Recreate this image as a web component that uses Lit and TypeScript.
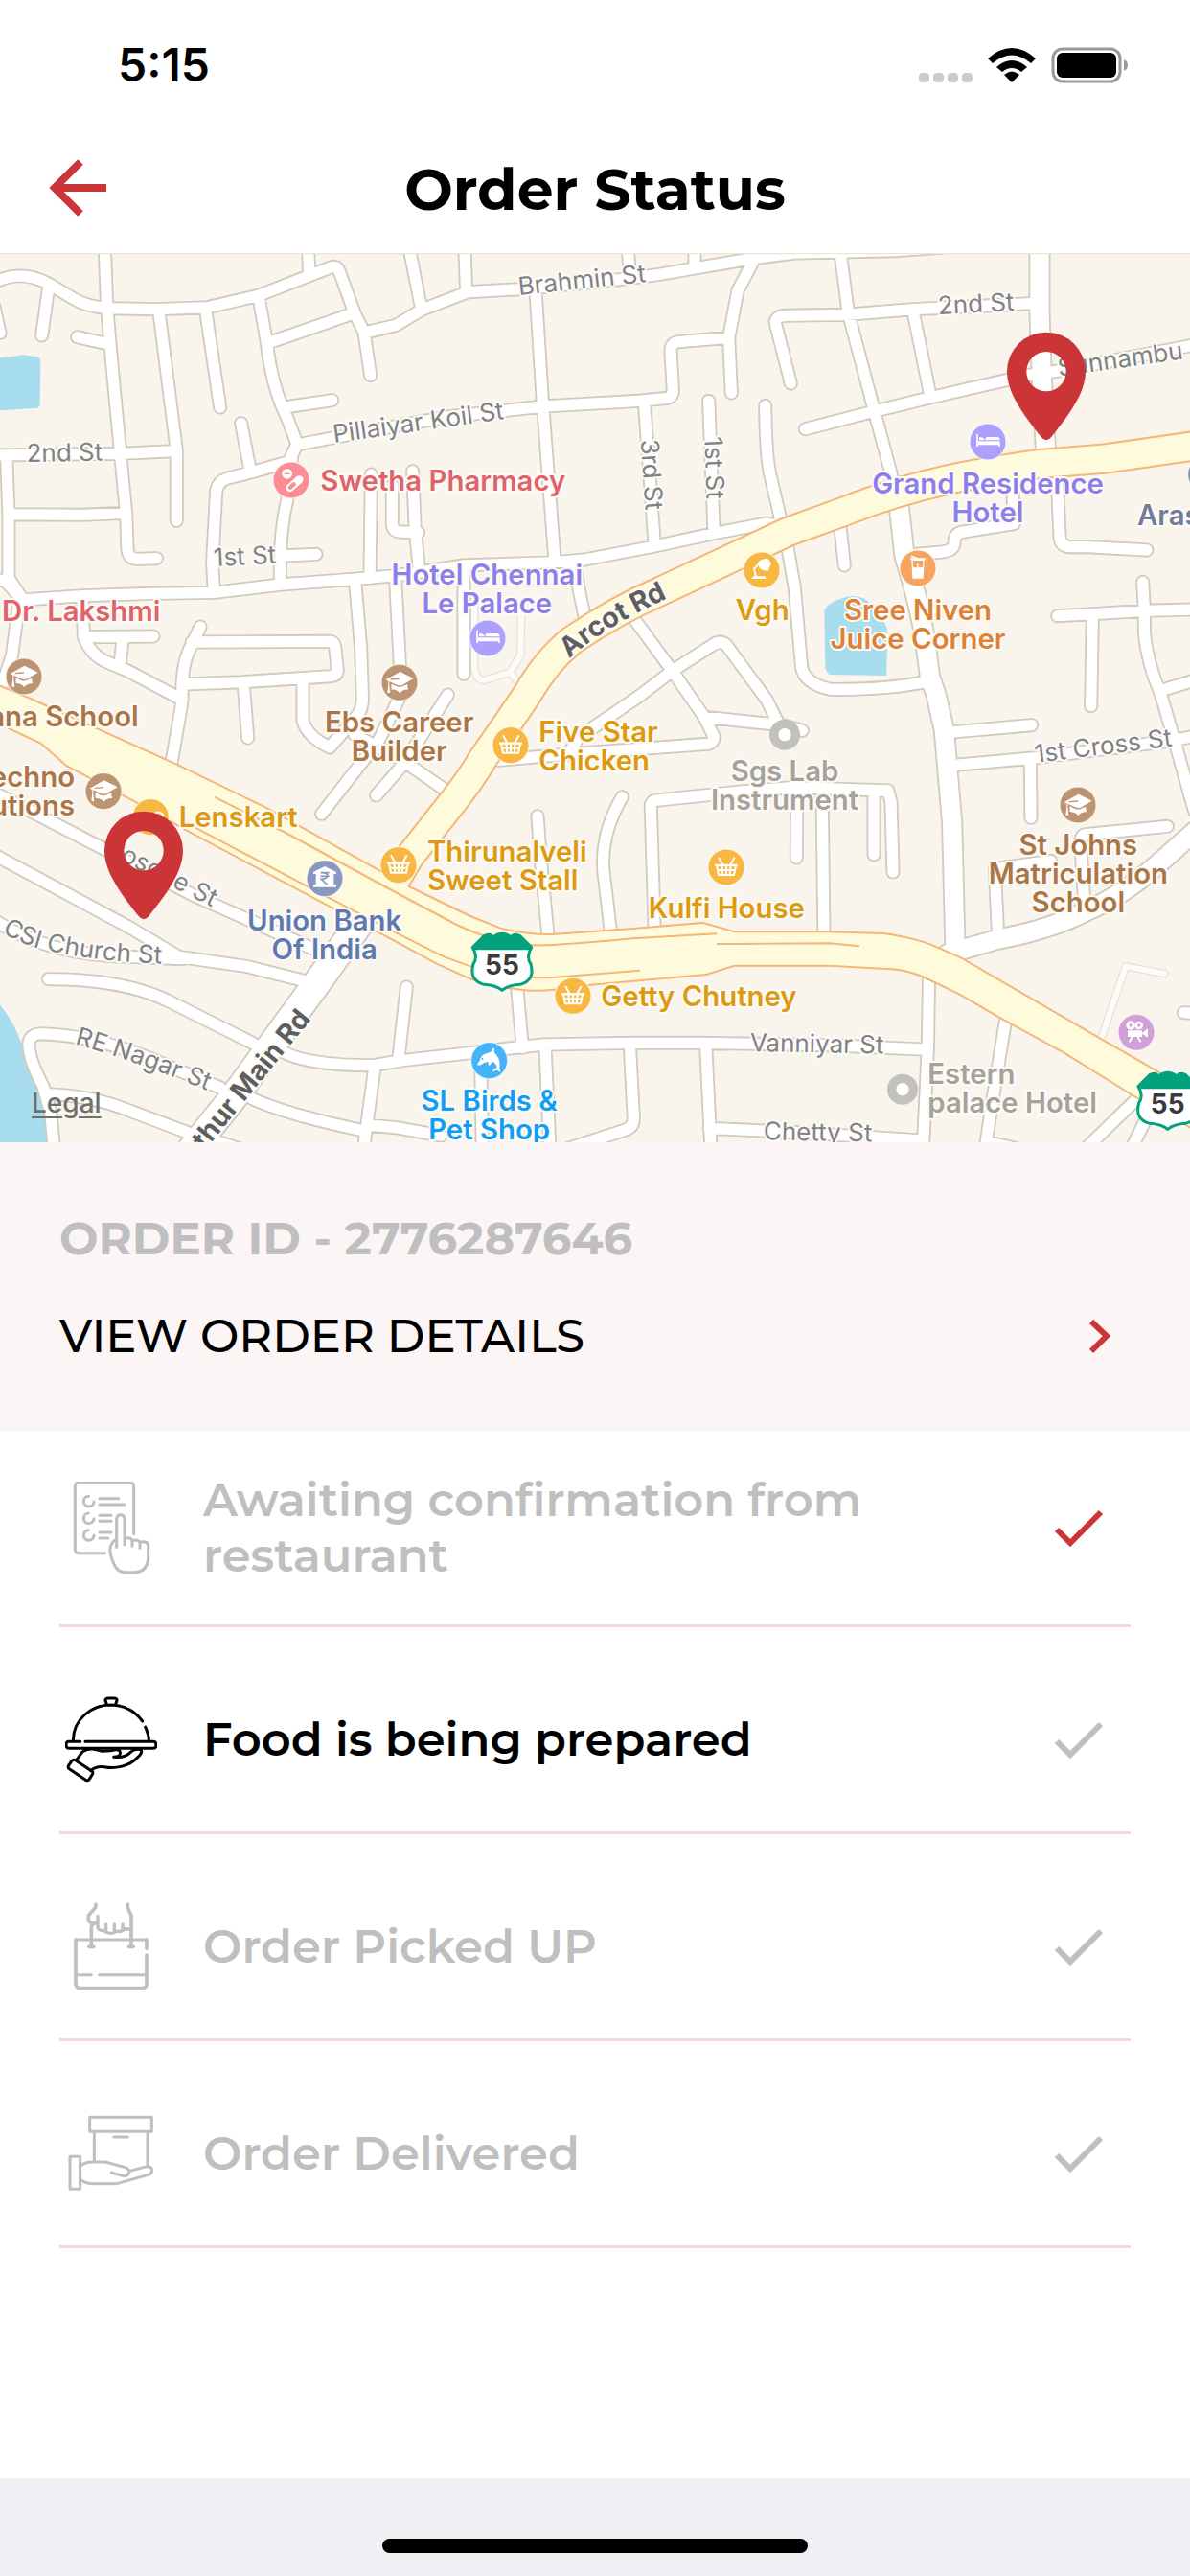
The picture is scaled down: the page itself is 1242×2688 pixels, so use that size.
import { LitElement, html, svg, css } from "lit";
import { customElement, property } from "lit/decorators.js";
import { classMap } from "lit/directives/class-map.js";

/* ---------- Map data: canvas units, 3726 wide ---------- */

const STREETS = [
  "M-10 100C40 78 90 76 150 107L230 155Q270 180 340 185L490 188L650 182L810 145L1035 57Q1055 50 1062 68L1110 200L1140 260L1160 395",
  "M328 0L335 180L345 300L377 640L395 830L399 940Q402 970 430 970L490 968",
  "M152 120L131 270",
  "M-18 180L0 262",
  "M242 275L330 295",
  "M497 190L553 630L553 850",
  "M643 185L689 495",
  "M810 150L835 290Q850 430 900 530L930 610L905 665L800 695L710 718Q680 728 677 760L665 980L670 1075",
  "M835 295L1095 205",
  "M1140 262L1240 238L1320 190L1465 134L1630 125L1940 95L2060 80L2350 30L2490 12L2800 5L2950 -5",
  "M965 0L968 75",
  "M890 495L1040 473",
  "M755 545L783 690",
  "M930 612L1150 570L1400 525L1700 492L2000 475L2090 466Q2108 462 2107 440L2100 320Q2100 292 2125 290L2280 277",
  "M2365 25L2310 130L2282 277L2290 450",
  "M1282 0L1320 190",
  "M1455 0L1460 135",
  "M1966 0L1972 80",
  "M2175 0L2175 60",
  "M1677 130L1700 490L1737 975",
  "M2017 475L2050 930",
  "M2219 475L2235 880",
  "M2396 490Q2398 640 2410 700L2450 870",
  "M2460 900L2488 1060L2510 1310Q2520 1360 2600 1378Q2780 1380 2910 1352",
  "M3230 170L2860 188L2650 205L2460 208Q2420 210 2430 240L2476 420",
  "M2630 0L2656 200L2736 500L2800 740",
  "M2858 190L2911 450",
  "M2521 563L2736 508L2911 465L3216 395L3320 380L3740 300",
  "M3311 740L3318 900Q3320 930 3350 932L3406 932L3591 942",
  "M3171 740L3174 860L3010 886Q2988 892 2988 920Q2985 945 2950 948L2870 955",
  "M2631 870L2644 990",
  "M3578 1042L3583 1130L3583 1200Q3590 1290 3635 1395L3672 1520L3740 1760",
  "M3311 1148L3421 1142L3581 1132L3740 1128",
  "M3421 1142L3416 1430",
  "M3640 1380L3740 1350",
  "M-10 645L377 640L545 632",
  "M20 645L27 830L27 1030L70 1095",
  "M-10 1035L15 1037L70 1098L260 1085L480 1078L670 1075L880 1050L1120 1032L1240 1022L1450 990L1737 980L1830 972L2050 930L2235 890L2400 858L2460 870",
  "M27 830L255 832L395 826",
  "M60 1100L38 1270L-5 1400",
  "M258 1085L262 1210Q280 1270 340 1295L400 1320L570 1410",
  "M262 1214L480 1212",
  "M385 1214L375 1305",
  "M627 1182L590 1260Q568 1310 570 1400L568 1430L535 1620",
  "M600 1230L1035 1228Q1048 1230 1050 1250L1057 1320Q1055 1335 1035 1337L760 1355L570 1362",
  "M762 1355L776 1530",
  "M948 1345L948 1475Q960 1525 1032 1560L1118 1460Q1136 1440 1135 1400L1130 1250L1112 1040",
  "M1238 1030L1252 1300",
  "M1452 1000L1452 1330",
  "M1228 740L1228 865Q1232 885 1255 885L1310 887",
  "M1292 695L1300 880L1312 1000",
  "M1162 705L1158 1030",
  "M915 640L900 780Q872 900 878 1045",
  "M878 960L990 955",
  "M1800 990Q1815 1090 1838 1180",
  "M1980 1150L2105 1320L2205 1465L2235 1525Q2237 1545 2215 1549L1790 1580L1560 1600",
  "M2105 1320L2230 1240Q2255 1222 2275 1240L2400 1410L2440 1490",
  "M2105 1320L2000 1400L1810 1530L1780 1580",
  "M2205 1465L2450 1490L2512 1507",
  "M1402 1395L1265 1610L1178 1710",
  "M1255 1395L1185 1540L1007 1768",
  "M1110 1520L1260 1600L1390 1690",
  "M-10 1705L320 1875L600 2020L980 2190",
  "M-10 1900L400 2120L560 2215L770 2245L950 2290",
  "M-10 2105Q150 2210 400 2215L570 2222",
  "M152 2285Q380 2285 520 2350L800 2490",
  "M170 2820L158 2700L135 2620Q92 2540 90 2490Q90 2458 130 2456Q280 2460 450 2525L690 2625",
  "M150 2645Q290 2650 400 2695L600 2770",
  "M790 2660Q900 2710 1140 2760",
  "M670 2790L760 2820",
  "M880 2510Q960 2556 1170 2555L1260 2540L1480 2515L1700 2490L1980 2485L2200 2485L2596 2492L2890 2505",
  "M1273 2310L1247 2540",
  "M1173 2560L1138 2820",
  "M1150 2742L1240 2750L1380 2775",
  "M1618 2300L1636 2500",
  "M1505 2520L1510 2820",
  "M1707 2500L1722 2820",
  "M1972 2490L1984 2720Q1984 2750 1955 2758L1780 2815",
  "M2210 2490L2226 2820",
  "M2220 2752L2500 2765L2880 2790",
  "M1683 1775L1692 1900L1718 2170",
  "M1948 1715Q1880 1830 1890 1950L1915 2160",
  "M2050 2150L2038 1750Q2035 1725 2060 1725L2300 1700L2480 1685L2780 1695L2790 1730L2796 1950",
  "M2495 1690L2494 1905",
  "M2574 1690L2580 2160",
  "M2736 1700L2736 1895",
  "M2980 1512L3230 1490",
  "M2990 1615L3246 1592L3660 1540L3740 1525",
  "M3226 1600L3228 1780",
  "M3655 1807L3400 1832Q3382 1835 3384 1865L3396 2060",
  "M3290 1915L3115 1940L3124 2130",
  "M2909 2260L2905 2500L2890 2820",
  "M3151 2400L3110 2650L3084 2820",
  "M3090 2795L3180 2815",
  "M3580 2640L3395 2820",
  "M3600 2700L3540 2820",
  "M3706 2390L3745 2392",
].join("");

const ROADS = [
  "M3255 -20L3255 200L3262 400L3275 640",
  "M2812 780L2832 960Q2885 1130 2900 1250L2912 1340L2931 1395L2956 1505L2981 1795L2991 2190",
  "M2970 2205L3126 2160Q3290 2130 3406 2070Q3520 2020 3620 1930L3750 1815",
].join("");

const AVENUE = "M1140 2090L1005 2280L735 2650L590 2830";
const LANES =
  "M1485 1100L1485 1310Q1490 1348 1515 1350L1597 1325L1630 1270L1632 1140M1597 1325L1640 1380M3445 2480L3525 2245L3646 2268";
const ARCOT =
  "M3760 613L3466 655L3256 672Q3090 695 2966 722Q2790 762 2646 820L2466 885L2070 1070Q1930 1130 1790 1225Q1710 1290 1650 1395L1585 1490L1515 1590Q1480 1650 1430 1715L1280 1905L1230 1990";
const TRUNK =
  "M-20 1362L100 1412L550 1615L830 1750L1200 1955L1290 2003L1470 2090L1570 2130Q1660 2150 1730 2148L1980 2130L2200 2112L2300 2140L2596 2140L2766 2145Q2870 2160 2926 2185L3006 2220L3446 2475L3760 2655L3760 2765L3546 2645L3336 2515L3126 2400L3006 2330L2891 2275Q2830 2250 2776 2250L2596 2240L2300 2240L2210 2268L1850 2300Q1750 2318 1660 2318Q1560 2310 1470 2280L1370 2235L1260 2175L600 1825L420 1725L210 1615L130 1545L-20 1475Z";
const TRUNK_LINES =
  "M672 1715L900 1830L1260 2025L1430 2115Q1560 2175 1660 2179Q1740 2182 1980 2158L2245 2143M2244 2175L2596 2173L2691 2182M610 1810L1000 2015L1230 2135L1390 2215L1500 2255Q1620 2285 1730 2280L2003 2258";
const WATER =
  "M0 340L45 335L70 330L118 337L127 345L125 490L118 497L0 505ZM2581 1130Q2596 1105 2631 1095Q2676 1075 2716 1100L2766 1160L2778 1190L2776 1335L2596 1332L2584 1315ZM0 2365Q50 2430 68 2490Q72 2530 110 2600Q145 2700 148 2810L0 2810Z";

type Anchor = "start" | "middle" | "end";
type Poi = { lines: string[]; x: number; y: number; tone: string; anchor: Anchor };

const poi = (tone: string, anchor: Anchor, x: number, y: number, ...lines: string[]): Poi => ({
  lines, x, y, tone, anchor,
});

const POIS: Poi[] = [
  poi("health", "start", 1003, 755, "Swetha Pharmacy"),
  poi("health", "start", 6, 1165, "Dr. Lakshmi"),
  poi("stay", "middle", 1525, 1050, "Hotel Chennai", "Le Palace"),
  poi("shop", "middle", 2387, 1160, "Vgh"),
  poi("stay", "middle", 3093, 765, "Grand Residence", "Hotel"),
  poi("juice", "middle", 2874, 1160, "Sree Niven", "Juice Corner"),
  poi("slate", "start", 3561, 863, "Aras"),
  poi("school", "end", 434, 1495, "ana School"),
  poi("school", "end", 234, 1683, "Techno", "utions"),
  poi("shop", "start", 560, 1810, "Lenskart"),
  poi("bank", "middle", 1016, 2132, "Union Bank", "Of India"),
  poi("school", "middle", 1250, 1512, "Ebs Career", "Builder"),
  poi("shop", "start", 1687, 1542, "Five Star", "Chicken"),
  poi("shop", "start", 1338, 1917, "Thirunalveli", "Sweet Stall"),
  poi("plain", "middle", 2457, 1665, "Sgs Lab", "Instrument"),
  poi("shop", "middle", 2275, 2093, "Kulfi House"),
  poi("shop", "start", 1882, 2370, "Getty Chutney"),
  poi("pet", "middle", 1532, 2698, "SL Birds &", "Pet Shop"),
  poi("plain", "start", 2905, 2612, "Estern", "palace Hotel"),
  poi("school", "middle", 3376, 1895, "St Johns", "Matriculation", "School"),
];

type RoadName = { text: string; x: number; y: number; turn: number; major?: boolean; anchor?: Anchor };
const ROAD_NAMES: RoadName[] = [
  { text: "2nd St", x: 83, y: 666, turn: -1 },
  { text: "1st St", x: 670, y: 993, turn: -3 },
  { text: "Pillaiyar Koil St", x: 1046, y: 606, turn: -8 },
  { text: "Brahmin St", x: 1625, y: 144, turn: -6 },
  { text: "3rd St", x: 2006, y: 597, turn: 86 },
  { text: "1st St", x: 2206, y: 587, turn: 88 },
  { text: "2nd St", x: 2938, y: 204, turn: -3 },
  { text: "Sunnambu", x: 3316, y: 398, turn: -8 },
  { text: "Posode St", x: 330, y: 1890, turn: 27 },
  { text: "Vanniyar St", x: 2348, y: 2511, turn: 1 },
  { text: "Chetty St", x: 2390, y: 2788, turn: 1 },
  { text: "1st Cross St", x: 3243, y: 1608, turn: -7 },
  { text: "Arthur Main Rd", x: 975, y: 2410, turn: -51, major: true, anchor: "end" },
];
const CURVED_NAMES = [
  { id: "arcot", text: "Arcot Rd", d: "M1783 1282Q1900 1172 2160 1062", major: true },
  { id: "church", text: "CSI Church St", d: "M6 2138Q140 2235 640 2240", major: false },
  { id: "nagar", text: "RE Nagar St", d: "M234 2488Q440 2545 760 2680", major: false },
];

const GLYPHS = {
  cap: svg`<path d="M-43-9L2-34L44-13L8 8Q0 10-8 7L-32-4L-32 8L-29 32L-38 32L-35 5L-35-5Z" fill="#fff"/><path d="M-28-10L0-12" stroke="#bd9472" stroke-width="4"/><path d="M-26 4L-8 12Q0 15 8 12L24 5L27 22Q12 20 1 33Q-10 20-25 22Z" fill="#fff"/>`,
  basket: svg`<g stroke="#fff" fill="none"><path d="M-24-31L-10-6M26-31L12-6" stroke-width="6"/><path d="M-36-6H36" stroke-width="7"/><path d="M-30-5L-24 24H24L30-5M-14-5L-11 24M0-5V24M14-5L11 24M-29 9H29" stroke-width="6"/></g>`,
  bed: svg`<path d="M-33-25V15M-33 7H36V15" stroke="#fff" stroke-width="5" fill="none"/><path d="M-31-2H38V8H-31Z" fill="#fff"/><path d="M-27-5V-14Q-14-16-10-7V-5ZM-7-5V-12Q-6-15 0-15H30Q38-14 38-5Z" fill="#fff"/>`,
  pill: svg`<circle cx="-13" cy="-20" r="16" fill="#fff"/><path d="M-22-20H-4" stroke="#fb8d93" stroke-width="4"/><path d="M-4 24L25-2" stroke="#fff" stroke-width="25" stroke-linecap="round"/><path d="M-3 23L8 13" stroke="#fb8d93" stroke-width="13" stroke-linecap="round"/>`,
  lamp: svg`<path d="M-32 27L-26 19H10L14 27Z" fill="#fff"/><path d="M-18 20L-24-4L-4-24" stroke="#fff" stroke-width="6" fill="none"/><path d="M-12-24Q4-40 22-34L30-20Q24-10 20 2Q4 4-8-8Z" fill="#fff"/>`,
  juice: svg`<path d="M-24-32H24V-26H20L17 32H-17L-20-26H-24Z" fill="#fff"/><path d="M-16-24H16L15-2H2V-14H-3V-2Q-10 0-15-6Z" fill="#f7a461"/><path d="M-22-38L-4-32V-26" stroke="#fff" stroke-width="5" fill="none"/>`,
  bank: svg`<path d="M-36-20L0-38L36-20V-14H28V20H36V27H-36V20H-28V-14H-36Z" fill="#fff"/><path d="M-13-18H14M-13-7H14M-10-18Q10-18 8-7Q4 2-11 2L8 20" stroke="#8a97c0" stroke-width="5" fill="none"/>`,
  glasses: svg`<g fill="none" stroke="#fff" stroke-width="7"><circle cx="-22" cy="0" r="15"/><circle cx="24" cy="0" r="15"/></g>`,
  dolphin: svg`<path d="M-38 14Q-36 6-30 2Q-28-16-10-22Q0-24 6-28Q10-38 16-40Q14-30 18-22Q36-4 32 22L35 36L24 30L10 35Q12 26 24 22Q22 8 10 4Q4 14-2 16Q-4 10-2 5Q-18 6-24 12Q-30 16-38 14Z" fill="#fff"/><circle cx="-22" cy="-5" r="3" fill="#45b3f7"/>`,
  film: svg`<circle cx="-18" cy="-22" r="14" fill="#fff"/><circle cx="8" cy="-22" r="13" fill="#fff"/><circle cx="-18" cy="-22" r="5" fill="#d2a0d9"/><circle cx="8" cy="-22" r="5" fill="#d2a0d9"/><path d="M-27-6H18V2L36-12V16L18 4V14H-27Z" fill="#fff"/><path d="M-12 14L-22 30M4 14L14 30" stroke="#fff" stroke-width="6"/>`,
  none: svg``,
};

const BADGES: { x: number; y: number; fill: string; glyph: keyof typeof GLYPHS }[] = [
  { x: 912, y: 723, fill: "#fb8d93", glyph: "pill" },
  { x: 75, y: 1338, fill: "#bd9472", glyph: "cap" },
  { x: 1251, y: 1357, fill: "#bd9472", glyph: "cap" },
  { x: 324, y: 1697, fill: "#bd9472", glyph: "cap" },
  { x: 3375, y: 1740, fill: "#bd9472", glyph: "cap" },
  { x: 1527, y: 1218, fill: "#ada0fd", glyph: "bed" },
  { x: 3093, y: 603, fill: "#ada0fd", glyph: "bed" },
  { x: 2385, y: 1005, fill: "#f7b740", glyph: "lamp" },
  { x: 2874, y: 999, fill: "#f7a461", glyph: "juice" },
  { x: 472, y: 1778, fill: "#f7b740", glyph: "glasses" },
  { x: 1017, y: 1970, fill: "#8a97c0", glyph: "bank" },
  { x: 1248, y: 1928, fill: "#f7b740", glyph: "basket" },
  { x: 1599, y: 1553, fill: "#f7b740", glyph: "basket" },
  { x: 2274, y: 1935, fill: "#f7b740", glyph: "basket" },
  { x: 1794, y: 2338, fill: "#f7b740", glyph: "basket" },
  { x: 1532, y: 2540, fill: "#45b3f7", glyph: "dolphin" },
  { x: 3558, y: 2452, fill: "#d2a0d9", glyph: "film" },
  { x: 3776, y: 705, fill: "#8090b0", glyph: "none" },
];

@customElement("route-map")
class RouteMap extends LitElement {
  static styles = css`
    :host {
      display: block;
      position: relative;
      font-family: Inter, "Liberation Sans", sans-serif;
    }
    .canvas {
      display: block;
      width: 100%;
      height: auto;
      background: #f9f5ed;
    }
    .street, .road, .avenue, .lane, .arcot, .lines {
      fill: none;
      stroke-linecap: round;
      stroke-linejoin: round;
    }
    .case { stroke: #d3cabe; }
    .fill { stroke: #fff; }
    .street.case { stroke-width: 45; }
    .street.fill { stroke-width: 34; }
    .road.case { stroke-width: 69; }
    .road.fill { stroke-width: 58; }
    .avenue.case { stroke-width: 95; }
    .avenue.fill { stroke-width: 84; }
    .lane.case { stroke: #e6e3dc; stroke-width: 26; }
    .lane.fill { stroke: #fdfbf7; stroke-width: 18; }
    .arcot.case { stroke: #f5b676; stroke-width: 97; stroke-linecap: butt; }
    .arcot.fill { stroke: #fdfbdb; stroke-width: 85; stroke-linecap: butt; }
    .trunk-case { fill: #f5b676; stroke: #f5b676; stroke-width: 12; stroke-linejoin: round; }
    .trunk { fill: #fdfbdb; }
    .lines { stroke: #f5b676; stroke-width: 6; stroke-linecap: butt; }
    .water { fill: #a8dcef; }
    .name, .poi {
      paint-order: stroke;
      stroke: #fdfbf7;
      stroke-width: 12;
      stroke-linejoin: round;
    }
    .name { font-size: 78px; fill: #808285; }
    .name.major { font-size: 86px; font-weight: 700; fill: #5d5e60; }
    .poi { font-size: 88px; font-weight: 600; }
    .health { fill: #e0636b; }
    .stay { fill: #8d7eea; }
    .shop { fill: #dd9a10; }
    .juice { fill: #df8134; }
    .slate { fill: #6f7d9b; }
    .school { fill: #aa7648; }
    .bank { fill: #5f79b1; }
    .plain { fill: #a5a29a; }
    .pet { fill: #109df3; }
    .ring { fill: #fff; stroke: #c3c1bb; stroke-width: 28; }
    .badge-edge { stroke: #fff; stroke-opacity: 0.6; stroke-width: 4; }
    .route-no { font-size: 84px; font-weight: 700; fill: #3a3a3a; }
    .pin { fill: #cb3538; }
    .legal {
      position: absolute;
      left: 33px;
      bottom: 23px;
      font-size: 28px;
      line-height: 36px;
      font-weight: 500;
      color: #6f6f6c;
      text-decoration: underline;
      text-underline-offset: 4px;
    }
  `;

  private shield(x: number, y: number) {
    return svg`<g transform="translate(${x} ${y})">
      <path d="M-92-44L-56-80Q-38-90-28-76Q0-98 28-76Q38-90 56-80L92-44Q74-14 90 8Q104 60 56 72Q20 74 0 90Q-20 74-56 72Q-104 60-90 8Q-74-14-92-44Z"
        fill="#fff" stroke="#02a27f" stroke-width="9" stroke-linejoin="round"/>
      <path d="M-92-44L-56-84Q-38-92-28-78Q0-100 28-78Q38-92 56-84L92-44L86-36H-86Z" fill="#02a27f"/>
      <text class="route-no" y="42" text-anchor="middle">55</text>
    </g>`;
  }

  private pin(x: number, y: number) {
    return svg`<path class="pin" fill-rule="evenodd" transform="translate(${x} ${y})"
      d="M0 215Q-8 215-16 205C-60 148-123 72-123 0A123 123 0 1 1 123 0C123 72 60 148 16 205Q8 215 0 215ZM62 0A62 62 0 1 0-62 0A62 62 0 1 0 62 0Z"/>`;
  }

  render() {
    return html`
      <svg class="canvas" viewBox="0 12 3726 2784" role="img" aria-label="Map of the delivery route">
        <path class="water" d=${WATER} />
        <path class="lane case" d=${LANES} />
        <path class="lane fill" d=${LANES} />
        <path class="street case" d=${STREETS} />
        <path class="road case" d=${ROADS} />
        <path class="avenue case" d=${AVENUE} />
        <path class="street fill" d=${STREETS} />
        <path class="road fill" d=${ROADS} />
        <path class="avenue fill" d=${AVENUE} />
        <path class="arcot case" d=${ARCOT} />
        <path class="trunk-case" d=${TRUNK} />
        <path class="arcot fill" d=${ARCOT} />
        <path class="trunk" d=${TRUNK} />
        <path class="lines" d=${TRUNK_LINES} />
        <path d="M0 13H3726" stroke="#efe6d2" stroke-width="5" />
        ${ROAD_NAMES.map(
          (n) => svg`<text class=${classMap({ name: true, major: !!n.major })} text-anchor=${n.anchor ?? "start"}
            transform="translate(${n.x} ${n.y}) rotate(${n.turn})">${n.text}</text>`
        )}
        ${CURVED_NAMES.map(
          (n) => svg`<path id=${n.id} d=${n.d} fill="none"/>
            <text class=${classMap({ name: true, major: n.major })}><textPath href="#${n.id}">${n.text}</textPath></text>`
        )}
        ${BADGES.map(
          (b) => svg`<g transform="translate(${b.x} ${b.y})">
            <circle class="badge-edge" r="57" fill=${b.fill}/>${GLYPHS[b.glyph]}</g>`
        )}
        <circle class="ring" cx="2457" cy="1520" r="34" />
        <circle class="ring" cx="2826" cy="2630" r="34" />
        ${POIS.map((p) =>
          p.lines.map(
            (line, i) => svg`<text class="poi ${p.tone}" x=${p.x} y=${p.y + i * 90} text-anchor=${p.anchor}>${line}</text>`
          )
        )}
        ${this.shield(1572, 2230)} ${this.shield(3656, 2665)}
        ${this.pin(3276, 383)} ${this.pin(450, 1883)}
      </svg>
      <a class="legal" href="#legal">Legal</a>
    `;
  }
}

/* ---------- Order steps ---------- */

const STEP_ICONS = {
  confirm: svg`<svg class="icon" viewBox="84 78 288 288" aria-hidden="true"><g fill="none" stroke="currentColor" stroke-width="9" stroke-linecap="round" stroke-linejoin="round">
    <path d="M209 302H126Q115 302 115 291V93Q115 82 126 82H288Q299 82 299 93V242"/>
    <path d="M192 131H251M192 150H270M192 184H228M192 202H228M192 237H228M192 255H218"/>
    <path d="M157 124A16 16 0 1 0 174 141M157 177A16 16 0 1 0 174 194M157 230A16 16 0 1 0 174 247"/>
    <path d="M245 283V194Q247 182 257 182Q268 182 270 194V276M270 256Q291 250 294 264V280M294 264Q314 256 318 270V286M318 268Q344 262 344 280V318Q340 362 300 362H272Q246 362 236 334Q222 300 225 286Q228 268 245 258"/>
  </g></svg>`,
  prepare: svg`<svg class="icon" viewBox="84 747 288 288" aria-hidden="true"><g fill="none" stroke="currentColor" stroke-width="9" stroke-linecap="round" stroke-linejoin="round">
    <path d="M214 781L210 769Q210 762 220 762H237Q247 762 246 769L242 781"/>
    <path d="M109 894C110 828 165 783 228 783Q290 785 326 834M335 852Q346 876 346 894"/>
    <path d="M131 898H93Q87 899 87 908Q87 919 96 919H360Q369 919 369 908Q369 898 360 898H147"/>
    <path d="M121 953L137 931Q150 920 170 921Q186 924 200 928Q226 928 246 923Q258 924 256 936Q254 944 236 946Q272 950 290 930Q302 919 322 923Q326 934 312 946C286 976 240 984 206 977Q180 974 164 989"/>
    <path d="M116 956Q110 953 105 958L94 974Q92 981 98 984L148 1018Q156 1022 160 1015L170 999Q172 992 166 989Z"/>
  </g></svg>`,
  pickup: svg`<svg class="icon" viewBox="84 99 288 288" aria-hidden="true"><g fill="none" stroke="currentColor" stroke-width="9" stroke-linecap="round" stroke-linejoin="round">
    <path d="M117 222H339"/>
    <path d="M117 222V362Q119 373 130 374H326Q338 373 339 362V270M339 222V250" stroke-width="11"/>
    <path d="M121 332H166M191 332H335"/>
    <path d="M158 244H174M283 244H298" stroke-width="11"/>
    <path d="M166 240V182Q168 172 180 170Q160 172 157 160V146L180 120V111M291 240V146Q284 132 280 122V111" stroke-width="11"/>
    <path d="M186 148V184Q190 194 204 194Q214 202 226 202Q238 202 244 196Q262 198 268 189H286M212 174V194M238 174V197M264 174V192" stroke-width="10"/>
  </g></svg>`,
  deliver: svg`<svg class="icon" viewBox="84 747 288 288" aria-hidden="true"><g fill="none" stroke="currentColor" stroke-width="9" stroke-linejoin="round" stroke-linecap="round">
    <path d="M161 778H355V823H161ZM175 825V915M342 825V928"/><path d="M236 840H280"/>
    <path d="M99 901H131V1003H99Z"/>
    <path d="M133 930Q146 918 170 918H210L272 935Q286 940 284 951Q280 963 266 962L229 951M286 946L340 932Q356 932 356 944Q356 954 344 958L246 986H166Q146 984 133 975"/>
  </g></svg>`,
};

@customElement("order-step")
class OrderStep extends LitElement {
  @property() icon: keyof typeof STEP_ICONS = "confirm";
  @property() label = "";
  @property({ type: Boolean }) done = false;
  @property({ type: Boolean }) current = false;

  static styles = css`
    :host {
      display: flex;
      align-items: center;
      gap: 48px;
      padding: 69px 28px 48px 6px;
      border-bottom: 3px solid #f4d6d8;
      color: #bfbfbf;
    }
    :host(:first-child) { padding-top: 43px; padding-bottom: 43px; }
    .icon { flex: none; width: 96px; height: 96px; }
    .label { flex: 1; margin: 0; font-size: 48px; line-height: 58px; font-weight: 600; }
    .current { color: #000; }
    .check { flex: none; width: 52px; height: 40px; }
    .done { color: #cb3538; }
  `;

  render() {
    const tone = classMap({ label: true, current: this.current });
    return html`
      <span class=${classMap({ icon: true, current: this.current })}>${STEP_ICONS[this.icon]}</span>
      <p class=${tone}>${this.label}</p>
      <svg class=${classMap({ check: true, done: this.done })} viewBox="0 0 52 40" aria-hidden="true">
        <path d="M3 22L17 36L49 4" fill="none" stroke="currentColor" stroke-width="6" />
      </svg>
    `;
  }
}

const STEPS: { icon: keyof typeof STEP_ICONS; label: string; done?: boolean; current?: boolean }[] = [
  { icon: "confirm", label: "Awaiting confirmation from restaurant", done: true },
  { icon: "prepare", label: "Food is being prepared", current: true },
  { icon: "pickup", label: "Order Picked UP" },
  { icon: "deliver", label: "Order Delivered" },
];

@customElement("app-root")
class AppRoot extends LitElement {
  static styles = css`
    :host {
      display: flex;
      flex-direction: column;
      min-height: 100vh;
      background: #fff;
      color: #000;
      font-family: Montserrat, Inter, "Liberation Sans", sans-serif;
    }
    .status {
      display: flex;
      align-items: center;
      justify-content: space-between;
      box-sizing: border-box;
      height: 132px;
      padding: 4px 64px 0 123px;
      font-family: Inter, "Liberation Sans", sans-serif;
      font-size: 48px;
      line-height: 56px;
      font-weight: 600;
    }
    .signals { display: flex; align-items: center; gap: 16px; }
    .nav {
      display: grid;
      grid-template-columns: 120px 1fr 120px;
      align-items: center;
      height: 132px;
    }
    .back, .details {
      border: 0;
      margin: 0;
      background: none;
      font: inherit;
      color: inherit;
      cursor: pointer;
    }
    .back { display: flex; padding: 0 0 4px 51px; }
    .title { margin: 0; text-align: center; font-size: 60px; line-height: 72px; font-weight: 700; }
    .order {
      display: flex;
      flex-direction: column;
      gap: 44px;
      padding: 71px 82px 70px 62px;
      background: #fbf5f5;
    }
    .order-id { margin: 0; font-size: 48px; line-height: 58px; font-weight: 700; color: #bfbfbf; }
    .details {
      display: flex;
      align-items: center;
      justify-content: space-between;
      padding: 0;
      font-size: 48px;
      line-height: 58px;
      font-weight: 500;
      text-align: left;
    }
    .steps { padding: 0 62px; }
    .home {
      display: flex;
      align-items: flex-end;
      justify-content: center;
      box-sizing: border-box;
      height: 102px;
      margin-top: auto;
      padding-bottom: 24px;
      background: #efeef3;
    }
    .pill { width: 444px; height: 15px; border-radius: 8px; background: #000; }
  `;

  render() {
    return html`
      <div class="status">
        <span>5:15</span>
        <span class="signals">
          <svg width="56" height="38" viewBox="0 0 56 38" fill="#cbcbcb" aria-hidden="true">
            <rect x="0" y="27" width="11" height="10" rx="4" /><rect x="15" y="27" width="11" height="10" rx="4" />
            <rect x="30" y="27" width="11" height="10" rx="4" /><rect x="45" y="27" width="11" height="10" rx="4" />
          </svg>
          <svg width="50" height="36" viewBox="0 0 50 36" aria-hidden="true">
            <path d="M25 36L17 28Q25 21 33 28Z" />
            <path d="M9 20Q25 6 41 20L35 25Q25 17 15 25Z" />
            <path d="M0 11Q25 -11 50 11L45 16Q25 -1 5 16Z" />
          </svg>
          <svg width="81" height="38" viewBox="0 0 81 38" aria-hidden="true">
            <rect x="2" y="2" width="70" height="34" rx="10" fill="none" stroke="#999" stroke-width="3" />
            <rect x="6" y="6" width="62" height="26" rx="6" />
            <path d="M76 13Q80 15 80 19Q80 23 76 25Z" fill="#999" />
          </svg>
        </span>
      </div>
      <header class="nav">
        <button class="back" aria-label="Back">
          <svg width="60" height="60" viewBox="0 0 60 60" fill="none" stroke="#cb3538" stroke-width="8">
            <path d="M33 3L6 30L33 57M6 30H60" />
          </svg>
        </button>
        <h1 class="title">Order Status</h1>
      </header>
      <route-map></route-map>
      <section class="order">
        <p class="order-id">ORDER ID - 2776287646</p>
        <button class="details">
          <span>VIEW ORDER DETAILS</span>
          <svg width="23" height="37" viewBox="0 0 23 37" fill="none" stroke="#cb3538" stroke-width="6" aria-hidden="true">
            <path d="M2 3L18 18L2 34" />
          </svg>
        </button>
      </section>
      <main class="steps">
        ${STEPS.map(
          (s) => html`<order-step icon=${s.icon} label=${s.label} ?done=${s.done} ?current=${s.current}></order-step>`
        )}
      </main>
      <footer class="home"><span class="pill"></span></footer>
    `;
  }
}
